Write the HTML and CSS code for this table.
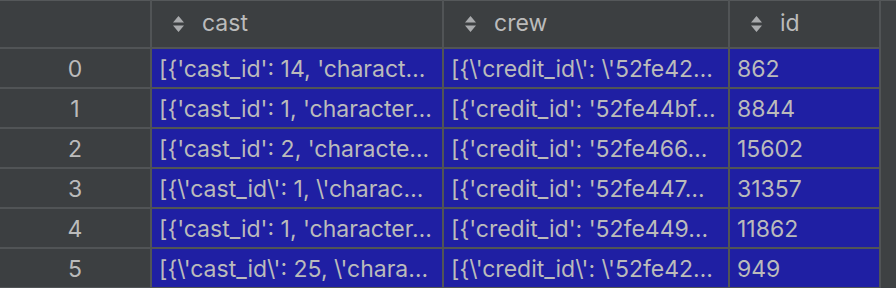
FILE: index.html
```html
<!DOCTYPE html>
<html>
<head>
<meta charset="utf-8">
<link rel="stylesheet" href="styles.css">
</head>
<body>
<div class="view">
  <div class="table">
    <div class="hcell idx"></div>
    <div class="hcell"><svg class="sort" viewBox="0 0 11 16" width="11" height="16"><path d="M5.5 0 L11 6.5 L0 6.5 Z M0 9.5 L11 9.5 L5.5 16 Z"/></svg><span>cast</span></div>
    <div class="hcell"><svg class="sort" viewBox="0 0 11 16" width="11" height="16"><path d="M5.5 0 L11 6.5 L0 6.5 Z M0 9.5 L11 9.5 L5.5 16 Z"/></svg><span>crew</span></div>
    <div class="hcell"><svg class="sort" viewBox="0 0 11 16" width="11" height="16"><path d="M5.5 0 L11 6.5 L0 6.5 Z M0 9.5 L11 9.5 L5.5 16 Z"/></svg><span>id</span></div>

    <div class="cell idx">0</div>
    <div class="cell sel">[{'cast_id': 14, 'charact…</div>
    <div class="cell sel">[{\'credit_id\': \'52fe42…</div>
    <div class="cell sel">862</div>

    <div class="cell idx">1</div>
    <div class="cell sel">[{'cast_id': 1, 'character…</div>
    <div class="cell sel">[{'credit_id': '52fe44bf…</div>
    <div class="cell sel">8844</div>

    <div class="cell idx">2</div>
    <div class="cell sel">[{'cast_id': 2, 'characte…</div>
    <div class="cell sel">[{'credit_id': '52fe466…</div>
    <div class="cell sel">15602</div>

    <div class="cell idx">3</div>
    <div class="cell sel">[{\'cast_id\': 1, \'charac…</div>
    <div class="cell sel">[{'credit_id': '52fe447…</div>
    <div class="cell sel">31357</div>

    <div class="cell idx">4</div>
    <div class="cell sel">[{'cast_id': 1, 'character…</div>
    <div class="cell sel">[{'credit_id': '52fe449…</div>
    <div class="cell sel">11862</div>

    <div class="cell idx">5</div>
    <div class="cell sel">[{\'cast_id\': 25, \'chara…</div>
    <div class="cell sel">[{\'credit_id\': \'52fe42…</div>
    <div class="cell sel">949</div>
  </div>
  <div class="strip"></div>
</div>
</body>
</html>
```

FILE: styles.css
```css
html, body {
  margin: 0;
  padding: 0;
  background: #3c3f41;
  overflow: hidden;
}

.view {
  display: flex;
  width: 896px;
  height: 288px;
  overflow: hidden;
  font-family: Inter, "Noto Sans", sans-serif;
  font-size: 23px;
  color: #bbbbbb;
}

.table {
  display: grid;
  grid-template-columns: 150px 290px 284px 149px;
  grid-auto-rows: 38px;
  grid-template-rows: 47px;
  gap: 2px;
  background: #515456;
  width: 879px;
  flex: none;
  align-content: start;
}

.hcell {
  background: #3c3f41;
  border-top: 1px solid #55585a;
  display: flex;
  align-items: center;
  padding-left: 21px;
  padding-bottom: 2px;
  box-sizing: border-box;
}

.hcell.idx {
  padding: 0;
}

.sort {
  fill: #a9abad;
  flex: none;
  margin-right: 18px;
  margin-top: 2px;
}

.cell {
  display: flex;
  align-items: center;
  white-space: nowrap;
  overflow: hidden;
  padding-left: 7px;
  padding-top: 1px;
  box-sizing: border-box;
}

.cell.idx {
  background: #3c3f41;
  justify-content: center;
  padding-left: 0;
}

.cell.sel {
  background: #1f1fa3;
}

.strip {
  flex: 1;
  background: #3e4143;
  border-left: 2px solid #515456;
  border-top: 1px solid #55585a;
}
```
